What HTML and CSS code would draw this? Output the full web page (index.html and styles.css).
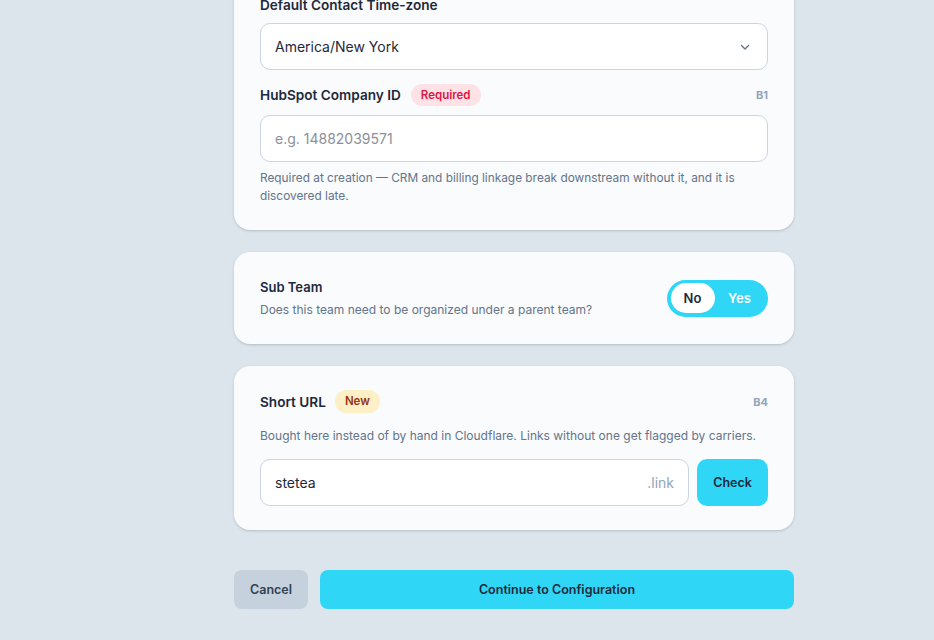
FILE: index.html
```html
<!DOCTYPE html>
<html lang="en">
<head>
<meta charset="utf-8">
<title>New Team</title>
<link rel="stylesheet" href="styles.css">
</head>
<body>
<main class="column">
  <section class="card card-fields">
    <div class="field">
      <label class="label">Default Contact Time-zone</label>
      <div class="control select">
        <span class="value">America/New York</span>
        <svg class="chevron" width="12" height="12" viewBox="0 0 12 12" aria-hidden="true"><path d="M2.5 4.5 L6 8 L9.5 4.5" fill="none" stroke="#64748b" stroke-width="1.4" stroke-linecap="round" stroke-linejoin="round"/></svg>
      </div>
    </div>
    <div class="field">
      <div class="label-row">
        <span class="label">HubSpot Company ID</span>
        <span class="pill pill-required">Required</span>
        <span class="code">B1</span>
      </div>
      <div class="control input">
        <span class="placeholder">e.g. 14882039571</span>
      </div>
      <p class="help">Required at creation — CRM and billing linkage break downstream without it, and it is discovered late.</p>
    </div>
  </section>

  <section class="card card-toggle">
    <div class="toggle-text">
      <div class="title">Sub Team</div>
      <div class="desc">Does this team need to be organized under a parent team?</div>
    </div>
    <div class="toggle">
      <span class="opt opt-on">No</span>
      <span class="opt opt-off">Yes</span>
    </div>
  </section>

  <section class="card card-url">
    <div class="label-row url-head">
      <span class="label">Short URL</span>
      <span class="pill pill-new">New</span>
      <span class="code">B4</span>
    </div>
    <p class="desc desc-url">Bought here instead of by hand in Cloudflare. Links without one get flagged by carriers.</p>
    <div class="url-row">
      <div class="control input url-input">
        <span class="value">stetea</span>
        <span class="suffix">.link</span>
      </div>
      <button class="btn btn-check">Check</button>
    </div>
  </section>

  <div class="actions">
    <button class="btn btn-cancel">Cancel</button>
    <button class="btn btn-primary">Continue to Configuration</button>
  </div>
</main>
</body>
</html>
```
FILE: styles.css
```css
* { box-sizing: border-box; }
html, body { margin: 0; padding: 0; }
body {
  background: #dce4ec;
  font-family: Inter, "Noto Sans", sans-serif;
  color: #1e293b;
  height: 640px;
  overflow: hidden;
}
.column {
  width: 560px;
  margin-left: 234px;
  margin-top: -30px;
  display: flex;
  flex-direction: column;
}
.card {
  background: #f9fbfd;
  border-radius: 16px;
  box-shadow: 0 1px 3px rgba(15, 23, 42, 0.14), 0 1px 1px rgba(15, 23, 42, 0.04);
  padding: 24px 26px;
}
.card-fields {
  padding: 26px 26px 25px;
  display: flex;
  flex-direction: column;
  gap: 14px;
}
.field { display: flex; flex-direction: column; }
.label {
  font-size: 13.6px;
  font-weight: 600;
  line-height: 18px;
  color: #1e293b;
}
.field > .label { margin-bottom: 9px; }
.label-row {
  display: flex;
  align-items: center;
  height: 22px;
  gap: 10px;
}
.url-head { height: 23px; gap: 9px; }
.field .label-row { margin-bottom: 9px; }
.pill {
  font-size: 11.5px;
  font-weight: 600;
  line-height: 22px;
  padding: 0 10px;
  border-radius: 11px;
}
.pill-required { background: #fee2e6; color: #df1545; }
.pill-new { background: #fdf0c6; color: #9a3412; height: 23px; line-height: 23px; padding: 0 10px; border-radius: 12px; }
.code {
  margin-left: auto;
  font-size: 11px;
  font-weight: 700;
  color: #94a3b8;
}
.control {
  height: 47px;
  background: #ffffff;
  border: 1px solid #cbd5e1;
  border-radius: 10px;
  display: flex;
  align-items: center;
  padding: 0 14px;
  font-size: 14px;
}
.select { justify-content: space-between; padding-right: 14px; }
.value { color: #1e293b; }
.placeholder { color: #8b9099; }
.chevron { margin-right: 2px; }
.help {
  margin: 7px 0 0;
  font-size: 11.85px;
  line-height: 18px;
  color: #64748b;
}
.card-toggle {
  margin-top: 22px;
  display: flex;
  align-items: center;
  justify-content: space-between;
  height: 92px;
}
.title {
  font-size: 13px;
  font-weight: 600;
  line-height: 20px;
}
.desc {
  font-size: 12px;
  line-height: 18px;
  color: #64748b;
  margin-top: 4px;
}
.toggle {
  width: 101px;
  height: 37px;
  background: #2fd6f6;
  border-radius: 19px;
  padding: 3.5px;
  display: flex;
  align-items: center;
}
.opt {
  height: 30px;
  display: flex;
  align-items: center;
  justify-content: center;
  font-size: 13px;
  font-weight: 600;
}
.opt-on {
  width: 44px;
  background: #ffffff;
  border-radius: 15px;
  color: #1e293b;
}
.opt-off { flex: 1; color: #ffffff; }
.card-url {
  margin-top: 22px;
  padding: 24px 26px 24px;
}
.desc-url { margin: 14px 0 0; }
.url-row {
  margin-top: 14px;
  display: flex;
  gap: 8px;
}
.url-input { flex: 1; justify-content: space-between; }
.suffix { color: #94a3b8; }
.btn {
  font-family: inherit;
  border: none;
  font-weight: 600;
  font-size: 12.5px;
  color: #1e293b;
  cursor: pointer;
}
.btn-check {
  width: 71px;
  height: 47px;
  background: #2fd6f6;
  border-radius: 10px;
}
.actions {
  margin-top: 40px;
  display: flex;
  gap: 12px;
}
.btn-cancel {
  width: 74px;
  height: 39px;
  background: #c5d1dd;
  border-radius: 8px;
  color: #334155;
}
.btn-primary {
  flex: 1;
  height: 39px;
  background: #2fd6f6;
  border-radius: 8px;
}
```
